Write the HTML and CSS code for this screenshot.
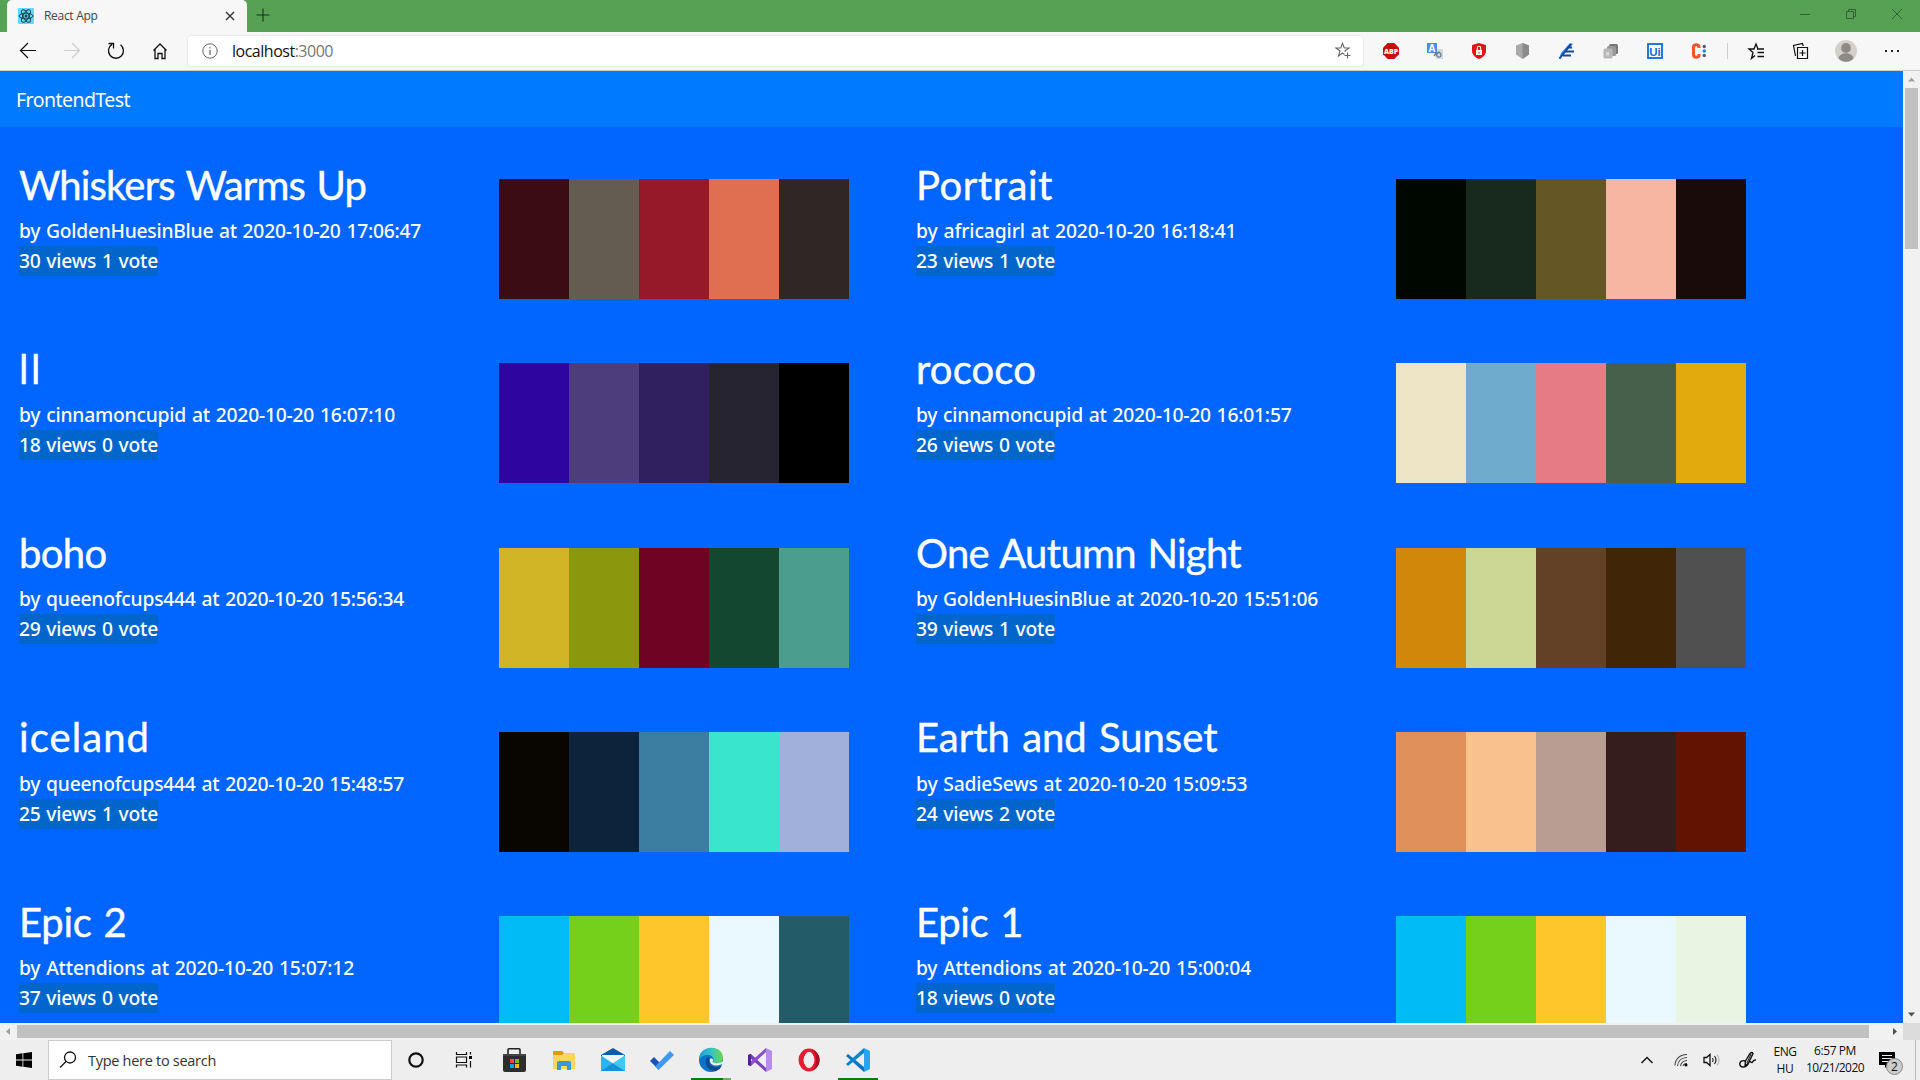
FILE: index.html
```html
<!DOCTYPE html>
<html lang="en">
<head>
<meta charset="utf-8">
<title>React App</title>
<link rel="stylesheet" href="styles.css">
</head>
<body>
<header class="tabstrip">
  <div class="tab">
    <svg class="favicon" viewBox="0 0 16 16"><rect width="16" height="16" rx="1" fill="#61dafb"/><g fill="none" stroke="#20404c" stroke-width="1"><ellipse cx="8" cy="8" rx="7" ry="2.8"/><ellipse cx="8" cy="8" rx="7" ry="2.8" transform="rotate(60 8 8)"/><ellipse cx="8" cy="8" rx="7" ry="2.8" transform="rotate(120 8 8)"/></g><circle cx="8" cy="8" r="1.5" fill="#20404c"/></svg>
    <span class="tab-title" data-fit="53.5">React App</span>
    <svg class="tab-close" viewBox="0 0 10 10"><path d="M1 1l8 8M9 1l-8 8" stroke="#333" stroke-width="1.4"/></svg>
  </div>
  <svg class="new-tab" viewBox="0 0 14 14"><path d="M7 .5v13M.5 7h13" stroke="#1c301c" stroke-width="1.1"/></svg>
  <div class="window-buttons">
    <svg viewBox="0 0 46 28"><path d="M18 14.5h10" stroke="#355f34"/></svg>
    <svg viewBox="0 0 46 28"><path d="M18.500 11.500h7v7h-7zM20.500 11.500v-2h7v7h-2" fill="none" stroke="#355f34"/></svg>
    <svg viewBox="0 0 46 28"><path d="M18 9l10 10M28 9l-10 10" stroke="#355f34"/></svg>
  </div>
</header>

<nav class="toolbar">
  <svg class="tool" viewBox="0 0 44 38"><path d="M30 18.500H15M22 11l-7.500 7.500 7.500 7.500" fill="none" stroke="#111" stroke-width="1.2"/></svg>
  <svg class="tool" viewBox="0 0 44 38"><path d="M14 18.500h15M22 11l7.500 7.500-7.500 7.500" fill="none" stroke="#ccc" stroke-width="1.2"/></svg>
  <svg class="tool" viewBox="0 0 44 38"><path d="M26.500 12.800a7.500 7.500 0 1 1-8.500-.4M14.500 11.500h5v5" fill="none" stroke="#111" stroke-width="1.3"/></svg>
  <svg class="tool" viewBox="0 0 44 38"><path d="M15.500 18.500l6.500-6.500 6.500 6.500M17 17.500v9h3v-5h4v5h3v-9" fill="none" stroke="#111" stroke-width="1.3"/></svg>
  <div class="address">
    <svg class="info" viewBox="0 0 16 16"><circle cx="8" cy="8" r="7.200" fill="none" stroke="#666"/><path d="M8 7v5M8 4v1.500" stroke="#555" stroke-width="1.100"/></svg>
    <span class="url" data-fit="101">localhost<span class="port">:3000</span></span>
    <svg class="star" viewBox="0 0 18 18"><path d="M10.500 12.500l-2-1.500-4 3 1.500-5-4-3h4.700l1.800-4.700L10.300 6H15l-4 3 .3 1M13.500 10.500v6M10.500 13.500h6" fill="none" stroke="#666" stroke-width="1.100"/></svg>
  </div>
  <div class="extensions">
    <svg class="tool" viewBox="0 0 44 38"><path d="M18.700 11h6.600l4.700 4.700v6.600L25.300 27h-6.600L14 22.300v-6.600z" fill="#c70d0d"/><text x="22" y="22" class="abp" text-anchor="middle" textLength="14" lengthAdjust="spacingAndGlyphs">ABP</text></svg>
    <svg class="tool" viewBox="0 0 44 38"><path d="M20 17h10v10h-7z" fill="#d5d9dd"/><rect x="14" y="11" width="10" height="10" fill="#4a8af4"/><text x="19" y="19.500" class="tr-a" text-anchor="middle">A</text><path d="M21 24c2-5 7-4 7-1 0 2-3 3-4 1s1-4 3-4M22 20l2 4" stroke="#607d8b" stroke-width="1.200" fill="none"/></svg>
    <svg class="tool" viewBox="0 0 44 38"><path d="M22 11l7 2v6c0 4-4 7-7 8-3-1-7-4-7-8v-6z" fill="#e81216"/><path d="M19 18h6v5h-6z" fill="#fff"/><path d="M20.300 18v-2a1.700 1.700 0 0 1 3.400 0v2" fill="none" stroke="#fff" stroke-width="1.100"/><path d="M22 20v1.500" stroke="#e81216"/></svg>
    <svg class="tool" viewBox="0 0 44 38"><path d="M21.500 11l6.500 2.500v9L21.500 27 15 22.500v-9z" fill="#aaa"/><path d="M21.500 11l6.500 2.500v9L21.500 27z" fill="#8b8b8b"/></svg>
    <svg class="tool" viewBox="0 0 44 38"><path d="M25 11l3 1-8 9-5 6h-1l2-6z" fill="#3f86df"/><path d="M26 12L14.500 26.500M22 15.500h5M20 19.500h9M18 23.500h8" stroke="#1549a8" stroke-width="2"/></svg>
    <svg class="tool" viewBox="0 0 44 38"><rect x="20" y="12" width="9" height="10" rx="1.500" fill="#777"/><rect x="18" y="14" width="9" height="10" rx="1.500" fill="#999"/><rect x="14.500" y="16.500" width="9" height="10" rx="1.500" fill="#b8b8b8"/><rect x="17" y="20" width="3" height="3.500" fill="#d8d8d8"/></svg>
    <svg class="tool" viewBox="0 0 44 38"><rect x="15" y="12" width="14" height="14" fill="#fff" stroke="#0b6cda" stroke-width="1.800"/><text x="22" y="23.500" text-anchor="middle" class="ui">Ui</text></svg>
    <svg class="tool" viewBox="0 0 44 38"><path d="M22 16v-1c0-3-5.500-3-5.500 0v8c0 3 5.500 3 5.500 0v-1" fill="none" stroke="#f2552c" stroke-width="3"/><g fill="#555c66"><circle cx="27.300" cy="14.500" r="1.700"/><circle cx="27.300" cy="23.500" r="1.700"/></g><circle cx="27.300" cy="19" r="1.700" fill="#1685e0"/></svg>
    <span class="divider"></span>
    <svg class="tool" viewBox="0 0 44 38"><path d="M27 17h-4l-2-5-2 5h-5l4 3.500-1.500 6 3.500-3M22 17h7M22.500 20.500H29M22.500 24.500H29" fill="none" stroke="#111" stroke-width="1.300"/></svg>
    <svg class="tool" viewBox="0 0 44 38"><path d="M16.500 24l-2-10.500 9-2 .8 2.500" fill="none" stroke="#111" stroke-width="1.200"/><path d="M18.500 15.500h10v11h-10zM23.500 18v6M20.500 21h6" fill="none" stroke="#111" stroke-width="1.200"/></svg>
    <svg class="tool" viewBox="0 0 44 38"><circle cx="23" cy="19" r="11" fill="#d3d0cc"/><circle cx="23" cy="16" r="4.900" fill="#8e8984"/><path d="M15.500 26c1.500-6.500 13.500-6.500 15 0-3 5-12 5-15 0z" fill="#8e8984"/></svg>
    <svg class="tool dots" viewBox="0 0 50 38"><path d="M18 18h2v2h-2zM24 18h2v2h-2zM30 18h2v2h-2z" fill="#222"/></svg>
  </div>
</nav>

<div class="viewport">
  <div class="page">
    <div class="navbar"><span class="brand" data-fit="114">FrontendTest</span></div>
    <main class="palettes" id="palettes"></main>
  </div>
  <div class="vscroll">
    <svg viewBox="0 0 17 17"><path d="M5 10.500l3.500-4 3.500 4z" fill="#a0a0a0"/></svg>
    <div class="vthumb"></div>
    <svg class="end" viewBox="0 0 17 17"><path d="M5 6.500l3.500 4 3.500-4z" fill="#505050"/></svg>
  </div>
  <div class="hscroll">
    <svg viewBox="0 0 17 17"><path d="M10 5l-4 3.500 4 3.500z" fill="#a0a0a0"/></svg>
    <div class="hthumb"></div>
    <svg class="end" viewBox="0 0 17 17"><path d="M7 5l4 3.500-4 3.500z" fill="#505050"/></svg>
  </div>
  <div class="corner"></div>
</div>

<footer class="taskbar">
  <svg class="start" viewBox="0 0 48 40"><path d="M16 14.200l6.500-.9v6.300H16zM23.300 13.200L32 12v7.600h-8.700zM16 20.400h6.500v6.300l-6.500-.9zM23.300 20.400H32V28l-8.700-1.200z" fill="#000"/></svg>
  <div class="search">
    <svg viewBox="0 0 18 18"><circle cx="11" cy="6.500" r="5.500" fill="none" stroke="#111" stroke-width="1.300"/><path d="M7 10.500l-6 6" stroke="#111" stroke-width="1.300"/></svg>
    <span data-fit="128">Type here to search</span>
  </div>
  <svg class="app" viewBox="0 0 49 40"><circle cx="24" cy="20" r="6.700" fill="none" stroke="#111" stroke-width="2.200"/></svg>
  <svg class="app" viewBox="0 0 49 40"><path d="M15.500 12v2.500h10V12M15.500 27.500V25h10v2.500M15.500 17h10v5.500h-10zM29.500 12v2.500M29.500 21v6.500" fill="none" stroke="#111" stroke-width="1.200"/><path d="M28 16h3v3h-3z" fill="#000"/></svg>
  <svg class="app" viewBox="2 0 49 40"><path d="M20 15v-5.200q0-1 1-1h10q1 0 1 1V15" fill="none" stroke="#222" stroke-width="1.600"/><path d="M15 14h23v16q0 2-2 2H17q-2 0-2-2z" fill="#2d2d2d"/><path d="M15 14h23v2H15z" fill="#444"/><path d="M22 19h4v4h-4z" fill="#f25022"/><path d="M27 19h4v4h-4z" fill="#7fba00"/><path d="M22 24h4v4h-4z" fill="#00a4ef"/><path d="M27 24h4v4h-4z" fill="#ffb900"/></svg>
  <svg class="app" viewBox="1 0 49 40"><path d="M15 12q0-1 1-1h8l2 2v3H15z" fill="#e09b00"/><path d="M15 15h9l2-2h10q1 0 1 1v15H15z" fill="#ffd65c"/><path d="M19 30v-7q0-2 2-2h10q2 0 2 2v7h-4v-4h-6v4z" fill="#3a96dd"/></svg>
  <svg class="app" viewBox="1 0 49 40"><path d="M14 15l12-7 12 7v2H14z" fill="#0a5cad"/><path d="M15 15h22v8l-11 5-11-5z" fill="#f4f4f4"/><path d="M14 15.500l12 8 12-8V31H14z" fill="#28b5f0"/><path d="M14 31l12-8 12 8z" fill="#1492de"/><path d="M26 23.500l12-8V31z" fill="#3bc9f5"/></svg>
  <svg class="app" viewBox="1 0 49 40"><path d="M14 21l4-4 6 6-2 6z" fill="#1b54b8"/><path d="M19 26.500L34 11l4 4-15.500 15z" fill="#3f99ee"/></svg>
  <svg class="app running grouped" viewBox="1 0 49 40"><defs><linearGradient id="edgeTop"><stop offset="0" stop-color="#1b9ed6"/><stop offset=".5" stop-color="#35c1c8"/><stop offset="1" stop-color="#6ada45"/></linearGradient></defs><circle cx="26" cy="20" r="12" fill="#0c73c9"/><path d="M14 20C14 4 38 4 38 18c0 6-8 7-10.500 4.500 2-2.500 1-7.500-4.500-7.500-4 0-8 2-9 5z" fill="url(#edgeTop)"/><path d="M23 17c-5 4-1.500 14 8 14 3-1 4.500-3 5.500-5-5 2-11 1-12-3-.4-2 .5-3.500 0-5z" fill="#114a8b"/><path d="M25 18.500c-1.500 4 2.500 7.500 7 7 3-.2 6.500-2 6.500-2v-3c-2 3-9 3.500-11 1.500 1-1.300.5-2.500-.5-3.500z" fill="#eee"/></svg>
  <svg class="app" viewBox="1 0 49 40"><path d="M14 15l3-1 15 14v4L14 16z" fill="#7b3fb8"/><path d="M14 25l3 1 15-14V8L14 24z" fill="#8a4fcb"/><path d="M14 15v10l3 1V14z" fill="#52218f"/><path d="M32 8l6 3v18l-6 3z" fill="#b98af0"/></svg>
  <svg class="app" viewBox="1 0 49 40"><ellipse cx="26" cy="20" rx="8" ry="9" fill="none" stroke="#e81c30" stroke-width="5"/><path d="M30 10c9 4 9 16 0 20 4-5 4-15 0-20z" fill="#ad1020"/><ellipse cx="26" cy="20" rx="5" ry="8.300" fill="#eee"/></svg>
  <svg class="app running" viewBox="1 0 49 40"><path d="M14 16l2-2 16 13v5z" fill="#0a76bd"/><path d="M14 24l2 2 16-13V8z" fill="#0b84d0"/><path d="M32 8l6 3v18l-6 3z" fill="#2aa4f0"/></svg>
  <div class="tray">
    <svg class="chev" viewBox="0 0 14 10"><path d="M1.500 8L7 2.500 12.500 8" fill="none" stroke="#111" stroke-width="1.400"/></svg>
    <svg class="wifi" viewBox="0 0 14 14"><path d="M1 12.500C1 6 6 1.500 13 1.500M3.500 13C4 8 7.500 4.500 13 4.500M6.500 13c.3-3 3-5.500 6.500-5.500M9 13c.3-1.500 2-2.500 4-2.500" fill="none" stroke="#444" stroke-width="1.100"/><circle cx="12" cy="12" r="1.500" fill="#000"/></svg>
    <svg class="volume" viewBox="0 0 18 14"><path d="M1 4.500h2.500L7 1.500v11L3.500 9.500H1z" fill="none" stroke="#111" stroke-width="1.300"/><path d="M9.500 5q1.500 2 0 4M11.500 3q3 4 0 8" fill="none" stroke="#111" stroke-width="1.100"/><path d="M14 1.500q4 5.500 0 11" fill="none" stroke="#aaa"/></svg>
    <svg class="pen" viewBox="0 0 18 18"><path d="M6.500 10L11 2.500q2-2 3 0L9.500 12l-3.500 3zM6 10c-6-2-7 6-2 6 3 0 5-2 6-5 1-2 2 1 3 .5s1-3 4-2.500" fill="none" stroke="#111" stroke-width="1.400"/><path d="M12 3l-4 9" stroke="#111"/></svg>
    <div class="lang"><span data-fit="23">ENG</span><span data-fit="17">HU</span></div>
    <div class="clock"><span data-fit="42">6:57 PM</span><span data-fit="58">10/21/2020</span></div>
    <div class="notify">
      <svg viewBox="0 0 16 16"><path d="M0 0h16v13H9l-3 3v-3H0z" fill="#000"/><path d="M3 3.500h10M3 6.500h10M3 9.500h6" stroke="#eee"/></svg>
      <span class="count">2</span>
    </div>
    <span class="desktop-edge"></span>
  </div>
</footer>
<script src="app.js"></script>
</body>
</html>
```
FILE: app.js
```js
const palettes = [
  ["Whiskers Warms Up", 347, "GoldenHuesinBlue", "17:06:47", 402, 30, 1, ["#3a0c13", "#655c51", "#951927", "#df6f50", "#302626"]],
  ["Portrait", 137, "africagirl", "16:18:41", 320.5, 23, 1, ["#000600", "#18291d", "#655625", "#f6b6a1", "#1a0b0b"]],
  ["ll", 24, "cinnamoncupid", "16:07:10", 376, 18, 0, ["#2e059e", "#4d3d7c", "#312060", "#262431", "#000000"]],
  ["rococo", 120, "cinnamoncupid", "16:01:57", 375.5, 26, 0, ["#ede5c5", "#6eabcd", "#e67b84", "#47604c", "#e1ab0d"]],
  ["boho", 87.5, "queenofcups444", "15:56:34", 385, 29, 0, ["#d1b524", "#8b970d", "#6e0323", "#13472f", "#4b9d8d"]],
  ["One Autumn Night", 325, "GoldenHuesinBlue", "15:51:06", 402, 39, 1, ["#d1870a", "#ccd793", "#624127", "#402607", "#505050"]],
  ["iceland", 131, "queenofcups444", "15:48:57", 385, 25, 1, ["#090602", "#0d233b", "#3c7ea1", "#39e5cd", "#a0b0db"]],
  ["Earth and Sunset", 301.5, "SadieSews", "15:09:53", 331.5, 24, 2, ["#e0915a", "#f7c28d", "#b99d92", "#351d1d", "#611500"]],
  ["Epic 2", 107.5, "Attendions", "15:07:12", 335, 37, 0, ["#00bbf5", "#74d01b", "#ffc62b", "#eaf8ff", "#235b68"]],
  ["Epic 1", 107, "Attendions", "15:00:04", 335, 18, 0, ["#00bbf5", "#74d01b", "#ffc62b", "#eaf8ff", "#eaf4e2"]]
];

document.getElementById("palettes").innerHTML = palettes.map(
  ([title, titleWidth, user, time, byWidth, views, votes, colors]) => `
  <article class="palette">
    <div class="details">
      <h1><span data-fit="${titleWidth}">${title}</span></h1>
      <p class="by"><span data-fit="${byWidth}">by ${user} at 2020-10-20 ${time}</span></p>
      <p class="stats"><span class="badge" data-fit="139">${views} views ${votes} vote</span></p>
    </div>
    <div class="swatches">${colors.map(c => `<i style="background:${c}"></i>`).join("")}</div>
  </article>`).join("");

// Spread the letters of each label over its nominal width.
document.querySelectorAll("[data-fit]").forEach(el => {
  const gap = (Number(el.dataset.fit) - el.getBoundingClientRect().width) / el.textContent.length;
  el.style.letterSpacing = gap.toFixed(3) + "px";
});
```
FILE: styles.css
```css
* { box-sizing: border-box; }
body { margin: 0; width: 1920px; height: 1080px; overflow: hidden; display: flex; flex-direction: column; font-family: "Open Sans", "Noto Sans", sans-serif; color: #111; }
svg { display: block; flex: none; }
span[data-fit] { white-space: nowrap; }

.tabstrip { height: 32px; flex: none; background: #57a155; display: flex; padding-left: 7px; }
.tab { width: 240px; height: 32px; background: #f7f7f7; border-radius: 5px 5px 0 0; display: flex; align-items: center; padding: 0 12px 0 11px; }
.favicon { width: 16px; height: 16px; margin-right: 10px; }
.tab-title { font-size: 12px; line-height: 16px; padding-bottom: 1px; color: #444; }
.tab-close { width: 10px; height: 10px; margin-left: auto; }
.new-tab { width: 14px; height: 14px; margin: 8px 0 0 8.5px; }
.window-buttons { display: flex; margin-left: auto; }
.window-buttons svg { width: 46px; height: 28px; }

.toolbar { height: 39px; flex: none; background: #f7f7f7; border-bottom: 1px solid #ccc; display: flex; align-items: center; padding-left: 6px; }
.tool { width: 44px; height: 38px; }
.tool.dots { width: 50px; }
.address { width: 1175px; height: 30px; margin: 0 6px; background: #fff; border-radius: 4px; box-shadow: 0 0 3px #ddd; display: flex; align-items: center; padding: 0 11px 0 14px; }
.info { width: 16px; height: 16px; }
.url { font-size: 16px; margin-left: 14px; color: #111; }
.port { color: #777; }
.star { width: 18px; height: 18px; margin-left: auto; }
.extensions { display: flex; align-items: center; }
.divider { width: 1px; height: 16px; margin: 0 7px 0 6px; background: #ccc; }
.abp { font: 800 7.5px "Open Sans", sans-serif; fill: #fff; }
.tr-a { font: 700 10px "Open Sans", sans-serif; fill: #fff; }
.ui { font: 700 11.5px "Liberation Sans", sans-serif; fill: #0b6cda; }

.viewport { flex: none; height: 969px; display: grid; grid-template: 952px 17px / 1903px 17px; }
.page { background: #06f; overflow: hidden; color: #fff; }
.navbar { height: 56px; background: #007bff; padding: 0 16px; display: flex; align-items: center; }
.brand { font-family: "Noto Sans", sans-serif; font-size: 19.5px; line-height: 28px; padding-top: 1px; }
.palettes { padding: 33px 0 0 19px; display: grid; grid-template-columns: 897px 897px; grid-auto-rows: 184.25px; }
.palette { display: grid; grid-template-columns: 480px 350px; align-items: start; }
.details { padding-top: .6px; }
.details h1 { margin: 0 0 7.4px; font-family: Lato, sans-serif; font-size: 40px; line-height: 48px; font-weight: 400; word-spacing: 2px; -webkit-text-stroke: .4px #fff; }
.details p { margin: 0; height: 30px; font-family: "Noto Sans", sans-serif; font-size: 19.3px; line-height: 29.5px; font-weight: 500; word-spacing: 1px; }
.badge { display: inline-block; height: 30px; background: #06c; border-radius: 2px; }
.swatches { margin-top: 19px; height: 120px; display: grid; grid-template-columns: repeat(5, 70px); }

.vscroll, .hscroll { background: #f1f1f1; display: flex; }
.vscroll { flex-direction: column; }
.vscroll svg, .hscroll svg { width: 17px; height: 17px; }
.vscroll .end { margin-top: auto; }
.hscroll .end { margin-left: auto; }
.vthumb { height: 161px; margin: 0 2px; background: #c1c1c1; }
.hthumb { width: 1852px; margin: 2px 0; background: #c1c1c1; }
.corner { background: #dcdcdc; }

.taskbar { height: 40px; flex: none; background: #eee; display: flex; }
.start { width: 48px; height: 40px; }
.search { width: 344px; background: #fff; border: 1px solid #ccc; display: flex; align-items: center; gap: 11px; padding-left: 10px; font-size: 14.5px; color: #333; }
.search svg { width: 18px; height: 18px; }
.app { width: 49px; height: 40px; }
.running { background: linear-gradient(#107c10, #107c10) 5px 38px / 40px 2px no-repeat; }
.grouped { background: linear-gradient(90deg, #107c10 32px, #6fb06f 32px) 5px 38px / 40px 2px no-repeat; }
.tray { margin-left: auto; display: flex; align-items: center; font-size: 12px; line-height: 17px; }
.chev { width: 14px; height: 10px; margin-right: 20px; }
.wifi { width: 14px; height: 14px; margin-right: 15px; }
.volume { width: 18px; height: 14px; margin-right: 18px; }
.pen { width: 18px; height: 18px; margin-right: 11px; }
.lang, .clock { display: flex; flex-direction: column; align-items: center; }
.lang { width: 34px; }
.clock { width: 66px; margin: -2px 11px 0 0; }
.notify { position: relative; width: 24px; height: 20px; margin-right: 12px; }
.notify svg { width: 16px; height: 16px; margin-top: 2px; }
.count { position: absolute; left: 7px; top: 8px; width: 17px; height: 17px; border: 1px solid #888; border-radius: 50%; background: #ccc; font-size: 12px; line-height: 15px; text-align: center; }
.desktop-edge { width: 1px; height: 40px; background: #bbb; margin-right: 4px; }
```
